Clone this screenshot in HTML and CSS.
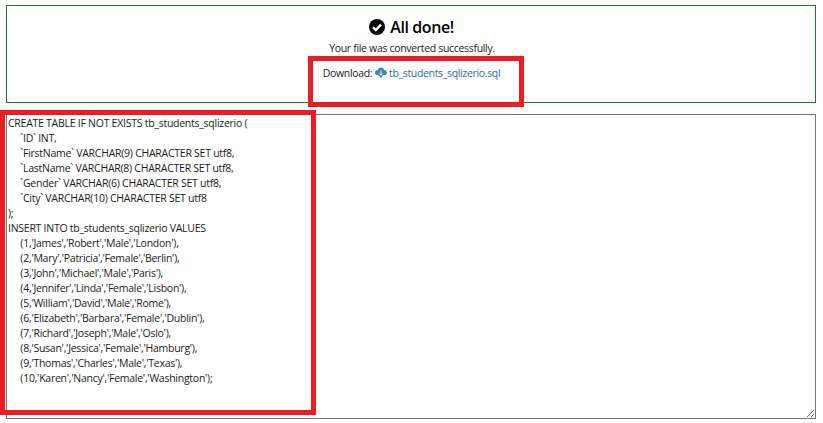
FILE: index.html
```html
<!DOCTYPE html>
<html lang="en">
<head>
<meta charset="utf-8">
<title>All done!</title>
<link rel="stylesheet" href="styles.css">
</head>
<body>
<main class="page">
  <section class="result">
    <h1 class="result-title">
      <svg class="check" viewBox="0 0 16 16" aria-hidden="true"><circle cx="8" cy="8" r="8" fill="#000"/><path d="M4 8.300l2.800 2.800L12 5.600" fill="none" stroke="#fff" stroke-width="2.300"/></svg>
      All done!
    </h1>
    <p class="result-text">Your file was converted successfully.</p>
    <p class="result-download">Download:
      <a class="file-link" href="#">
        <svg class="cloud" viewBox="0 0 12 12" aria-hidden="true"><path d="M6 .5C7.600 .5 8.800 1.600 9.100 3.100 10.700 3.200 12 4.300 12 5.800 12 7.200 10.800 8.300 9.300 8.300H8L6 11.500 4 8.300H2.700C1.200 8.300 0 7.200 0 5.800 0 4.300 1.300 3.200 2.900 3.100 3.200 1.600 4.400 .5 6 .5Z" fill="#3f86b8"/><path d="M6 3.500v4.500M4.300 6.500 6 8.300l1.700-1.800" fill="none" stroke="#fff" stroke-width=".9"/></svg>
        tb_students_sqlizerio.sql</a></p>
  </section>
  <textarea class="output" readonly spellcheck="false">CREATE TABLE IF NOT EXISTS tb_students_sqlizerio (
     `ID` INT,
     `FirstName` VARCHAR(9) CHARACTER SET utf8,
     `LastName` VARCHAR(8) CHARACTER SET utf8,
     `Gender` VARCHAR(6) CHARACTER SET utf8,
     `City` VARCHAR(10) CHARACTER SET utf8
);
INSERT INTO tb_students_sqlizerio VALUES
     (1,'James','Robert','Male','London'),
     (2,'Mary','Patricia','Female','Berlin'),
     (3,'John','Michael','Male','Paris'),
     (4,'Jennifer','Linda','Female','Lisbon'),
     (5,'William','David','Male','Rome'),
     (6,'Elizabeth','Barbara','Female','Dublin'),
     (7,'Richard','Joseph','Male','Oslo'),
     (8,'Susan','Jessica','Female','Hamburg'),
     (9,'Thomas','Charles','Male','Texas'),
     (10,'Karen','Nancy','Female','Washington');</textarea>
  <div class="mark mark-download"></div>
  <div class="mark mark-output"></div>
</main>
</body>
</html>
```
FILE: styles.css
```css
* { box-sizing: border-box; }
html, body { margin: 0; height: 100%; background: #fff; overflow: hidden; }
.page {
  position: relative;
  width: 823px;
  height: 423px;
  padding: 5px 7px 0 6px;
  font-family: "Open Sans", "Noto Sans", sans-serif;
  color: #212529;
}
.result {
  height: 98px;
  border: 1px solid #1a7f1a;
  padding: 10px 0 0;
  text-align: center;
}
.result-title {
  margin: 0;
  display: flex;
  justify-content: center;
  align-items: center;
  gap: 5px;
  height: 22px;
  padding-left: 1px;
  font-size: 16px;
  font-weight: 600;
  color: #000;
  letter-spacing: -0.4px;
}
.check { width: 16px; height: 16px; }
.result-text {
  margin: 3px 0 0;
  padding-left: 2px;
  font-size: 10.5px;
  line-height: 15px;
  color: #222;
  letter-spacing: -0.32px;
}
.result-download {
  margin: 10px 0 0;
  padding-left: 1px;
  font-size: 10.5px;
  line-height: 15px;
  color: #222;
  letter-spacing: -0.34px;
}
.file-link { color: #2f6f9f; text-decoration: none; }
.cloud { width: 12px; height: 12px; vertical-align: -2px; }
.output {
  display: block;
  width: 810px;
  height: 305px;
  margin: 11px 0 0;
  padding: 1px 1px 0;
  border: 1px solid #767676;
  border-radius: 0;
  outline: none;
  font-family: "Open Sans", "Noto Sans", sans-serif;
  font-size: 10.5px;
  line-height: 15px;
  letter-spacing: -0.26px;
  color: #1a1a1a;
  background: #fff;
  white-space: pre;
  overflow: hidden;
  resize: both;
}
.mark { position: absolute; border: 5px solid #ed1c24; pointer-events: none; }
.mark-download { left: 308px; top: 56px; width: 216px; height: 51px; }
.mark-output { left: 0; top: 110px; width: 316px; height: 305px; }
```
